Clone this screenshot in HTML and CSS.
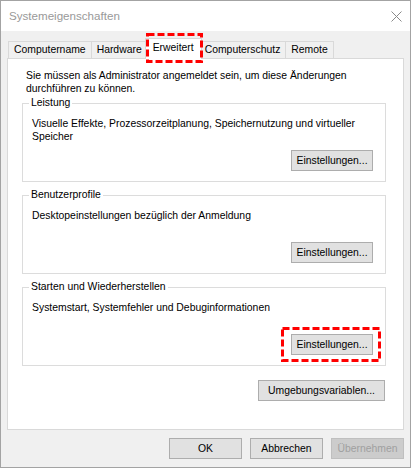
FILE: index.html
```html
<!DOCTYPE html>
<html lang="de">
<head>
<meta charset="utf-8">
<title>Systemeigenschaften</title>
<link rel="stylesheet" href="styles.css">
</head>
<body>
<div class="window">
  <div class="titlebar">
    <span class="title">Systemeigenschaften</span>
    <svg class="close" width="11" height="11" viewBox="0 0 11 11"><path d="M0.5 0.5 L10.5 10.5 M10.5 0.5 L0.5 10.5" stroke="#8a8a8a" stroke-width="1" fill="none"/></svg>
  </div>
  <div class="client">
    <div class="tabs">
      <div class="tab">Computername</div>
      <div class="tab">Hardware</div>
      <div class="tab selected">Erweitert<svg class="mark mark-tab" width="57" height="30" viewBox="0 0 57 30"><rect x="1.5" y="1.5" width="54" height="27" fill="none" stroke="#ff0000" stroke-width="3" stroke-dasharray="7 3"/></svg></div>
      <div class="tab">Computerschutz</div>
      <div class="tab">Remote</div>
    </div>
    <div class="panel">
      <p class="info">Sie müssen als Administrator angemeldet sein, um diese Änderungen<br>durchführen zu können.</p>
      <fieldset class="group">
        <legend>Leistung</legend>
        <p class="desc">Visuelle Effekte, Prozessorzeitplanung, Speichernutzung und virtueller<br>Speicher</p>
        <div class="group-actions">
          <button class="btn btn-settings">Einstellungen...</button>
        </div>
      </fieldset>
      <fieldset class="group">
        <legend>Benutzerprofile</legend>
        <p class="desc">Desktopeinstellungen bezüglich der Anmeldung</p>
        <div class="group-actions">
          <button class="btn btn-settings">Einstellungen...</button>
        </div>
      </fieldset>
      <fieldset class="group">
        <legend>Starten und Wiederherstellen</legend>
        <p class="desc">Systemstart, Systemfehler und Debuginformationen</p>
        <div class="group-actions">
          <span class="hl">
            <button class="btn btn-settings">Einstellungen...</button>
            <svg class="mark mark-btn" width="100" height="35" viewBox="0 0 100 35"><rect x="1.5" y="1.5" width="97" height="32" fill="none" stroke="#ff0000" stroke-width="3" stroke-dasharray="7 3"/></svg>
          </span>
        </div>
      </fieldset>
      <div class="panel-actions">
        <button class="btn btn-env">Umgebungsvariablen...</button>
      </div>
    </div>
    <div class="actions">
      <button class="btn btn-action">OK</button>
      <button class="btn btn-action">Abbrechen</button>
      <button class="btn btn-action" disabled>Übernehmen</button>
    </div>
  </div>
</div>
</body>
</html>
```
FILE: styles.css
```css
* {
  box-sizing: border-box;
}

html, body {
  margin: 0;
  padding: 0;
  background: #ffffff;
}

body {
  font-family: "Liberation Sans", Arial, sans-serif;
  font-size: 10.4px;
  color: #000000;
}

.window {
  width: 411px;
  height: 468px;
  border: 1px solid #a3a3a3;
  background: #f0f0f0;
  display: flex;
  flex-direction: column;
}

.titlebar {
  height: 30px;
  flex: none;
  background: #ffffff;
  display: flex;
  align-items: center;
  justify-content: space-between;
  padding: 0 8px;
}

.title {
  font-size: 11.6px;
  line-height: 30px;
  color: #999999;
}

.close {
  display: block;
  margin-top: 1px;
}

.client {
  flex: 1;
  display: flex;
  flex-direction: column;
  padding: 7px 6px 8px 6px;
}

.tabs {
  height: 20px;
  flex: none;
  display: flex;
  align-items: flex-end;
  padding-left: 1px;
}

.tab {
  height: 17px;
  line-height: 16px;
  padding: 0 5px;
  border: 1px solid #d9d9d9;
  border-bottom: none;
  background: #f0f0f0;
  margin-left: -1px;
  white-space: nowrap;
}

.tab:first-child {
  margin-left: 0;
}

.tab.selected {
  position: relative;
  z-index: 1;
  height: 21px;
  padding: 1px 7px 3px;
  margin: 0 -2px -1px -3px;
  background: #ffffff;
}

.mark {
  position: absolute;
  display: block;
  pointer-events: none;
}

.mark-tab {
  left: 0;
  top: -6px;
}

.panel {
  height: 372px;
  flex: none;
  background: #ffffff;
  border: 1px solid #d9d9d9;
  padding: 10px 17px 0 14px;
}

.info {
  margin: 0 0 0 4px;
  line-height: 13px;
  white-space: nowrap;
}

.group {
  display: block;
  margin: 7px 0 0 0;
  padding: 8px 12px 10px 9px;
  border: 1px solid #dcdcdc;
  min-width: 0;
}

.info + .group {
  margin-top: 2px;
}

.group legend {
  line-height: 12px;
  padding: 0 2px;
  margin-left: -3px;
  white-space: nowrap;
}

.desc {
  margin: 0;
  height: 33px;
  line-height: 13px;
  white-space: nowrap;
}

.group-actions,
.panel-actions {
  display: flex;
  justify-content: flex-end;
}

.btn {
  display: block;
  font-family: "Liberation Sans", Arial, sans-serif;
  font-size: 10.4px;
  color: #000000;
  background: #e1e1e1;
  border: 1px solid #adadad;
  height: 21px;
  padding: 0;
  margin: 0;
  line-height: 19px;
  white-space: nowrap;
}

.btn:disabled {
  background: #cccccc;
  border-color: #bfbfbf;
  color: #a0a0a0;
}

.btn-settings {
  width: 82px;
}

.hl {
  position: relative;
  display: block;
}

.mark-btn {
  left: -10px;
  top: -7px;
}

.panel-actions {
  margin: 14px 1px 0 0;
}

.btn-env {
  width: 127px;
}

.actions {
  display: flex;
  justify-content: flex-end;
  gap: 8px;
  margin-top: 8px;
}

.btn-action {
  width: 73px;
}
```
